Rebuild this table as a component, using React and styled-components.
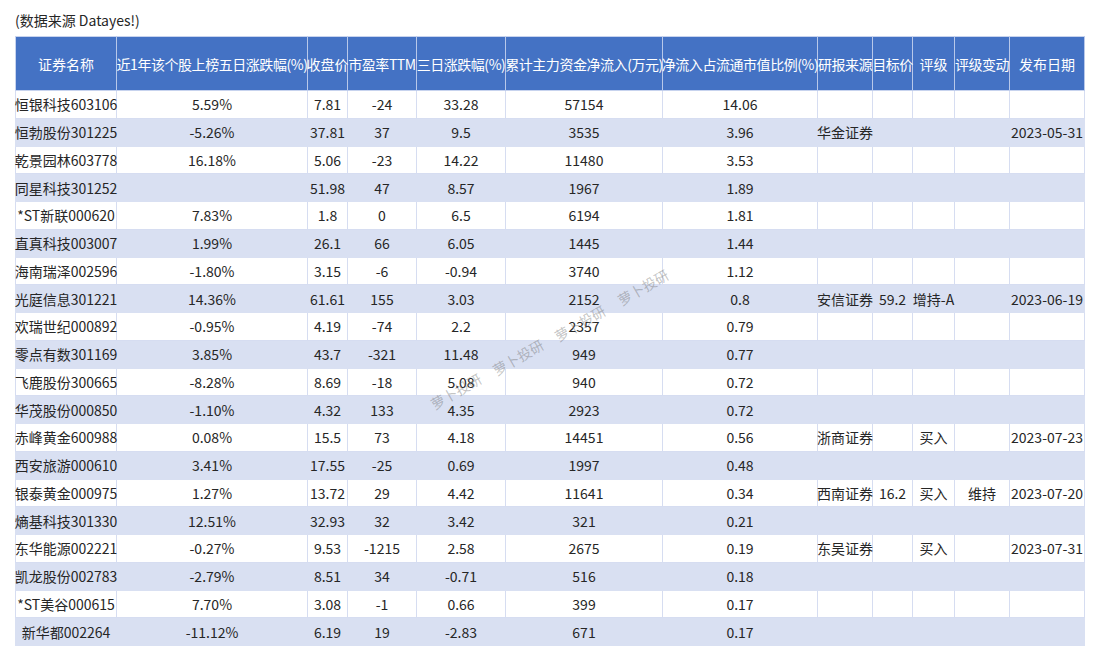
import React from "react";
import styled, { createGlobalStyle } from "styled-components";

const GlobalStyle = createGlobalStyle`
  html, body { margin: 0; padding: 0; background: #ffffff; }
  body { font-family: "Noto Sans CJK SC", "Noto Sans", sans-serif; color: #262626; }
`;

const COLS = "102px 191px 40px 69px 89px 157px 155px 55px 40px 42px 55px 75px";
const STRIPE = "#d9e0f2";
const LINE = "#d6ddf1";

const Page = styled.div`
  position: relative;
  width: 1100px;
  height: 660px;
  padding: 10px 15px 0 15px;
  box-sizing: border-box;
`;

const Caption = styled.div`
  font-size: 14px;
  line-height: 20px;
  height: 20px;
  margin-bottom: 6px;
  white-space: nowrap;
`;

const Table = styled.div`
  width: 1070px;
  display: flex;
  flex-direction: column;
`;

const Row = styled.div`
  display: grid;
  grid-template-columns: ${COLS};
  height: ${(p) => (p.$header ? "55px" : "27.75px")};
  background: ${(p) => (p.$header ? "#4472c4" : p.$striped ? STRIPE : "#ffffff")};
  color: ${(p) => (p.$header ? "#ffffff" : "#262626")};
`;

const Cell = styled.div`
  box-sizing: border-box;
  display: flex;
  align-items: center;
  justify-content: center;
  white-space: nowrap;
  font-size: 14px;
  line-height: 18px;
  min-width: 0;
  letter-spacing: ${(p) => (p.$header && p.$tight ? "-0.45px" : "0")};
  border-right: 1px solid ${(p) => (p.$header ? "#b8c8ea" : p.$striped ? STRIPE : LINE)};
  border-bottom: 1px solid ${(p) => (p.$header ? "#c7d3ee" : p.$striped ? STRIPE : LINE)};
  border-left: ${(p) => (p.$first ? `1px solid ${p.$header ? "#c7d3ee" : p.$striped ? STRIPE : LINE}` : "none")};
  border-top: ${(p) => (p.$header ? "1px solid #c7d3ee" : "none")};
`;

const Watermark = styled.span`
  position: absolute;
  font-size: 14px;
  line-height: 16px;
  color: rgba(110, 110, 110, 0.42);
  white-space: nowrap;
  transform: translate(-50%, -50%) rotate(-30deg);
  pointer-events: none;
`;

const headers = [
  "证券名称",
  "近1年该个股上榜五日涨跌幅(%)",
  "收盘价",
  "市盈率TTM",
  "三日涨跌幅(%)",
  "累计主力资金净流入(万元)",
  "净流入占流通市值比例(%)",
  "研报来源",
  "目标价",
  "评级",
  "评级变动",
  "发布日期",
];

const tightHeaders = new Set([1, 3, 4, 5, 6, 7, 8, 10]);

const rows = [
  ["恒银科技603106", "5.59%", "7.81", "-24", "33.28", "57154", "14.06", "", "", "", "", ""],
  ["恒勃股份301225", "-5.26%", "37.81", "37", "9.5", "3535", "3.96", "华金证券", "", "", "", "2023-05-31"],
  ["乾景园林603778", "16.18%", "5.06", "-23", "14.22", "11480", "3.53", "", "", "", "", ""],
  ["同星科技301252", "", "51.98", "47", "8.57", "1967", "1.89", "", "", "", "", ""],
  ["*ST新联000620", "7.83%", "1.8", "0", "6.5", "6194", "1.81", "", "", "", "", ""],
  ["直真科技003007", "1.99%", "26.1", "66", "6.05", "1445", "1.44", "", "", "", "", ""],
  ["海南瑞泽002596", "-1.80%", "3.15", "-6", "-0.94", "3740", "1.12", "", "", "", "", ""],
  ["光庭信息301221", "14.36%", "61.61", "155", "3.03", "2152", "0.8", "安信证券", "59.2", "增持-A", "", "2023-06-19"],
  ["欢瑞世纪000892", "-0.95%", "4.19", "-74", "2.2", "2357", "0.79", "", "", "", "", ""],
  ["零点有数301169", "3.85%", "43.7", "-321", "11.48", "949", "0.77", "", "", "", "", ""],
  ["飞鹿股份300665", "-8.28%", "8.69", "-18", "5.08", "940", "0.72", "", "", "", "", ""],
  ["华茂股份000850", "-1.10%", "4.32", "133", "4.35", "2923", "0.72", "", "", "", "", ""],
  ["赤峰黄金600988", "0.08%", "15.5", "73", "4.18", "14451", "0.56", "浙商证券", "", "买入", "", "2023-07-23"],
  ["西安旅游000610", "3.41%", "17.55", "-25", "0.69", "1997", "0.48", "", "", "", "", ""],
  ["银泰黄金000975", "1.27%", "13.72", "29", "4.42", "11641", "0.34", "西南证券", "16.2", "买入", "维持", "2023-07-20"],
  ["熵基科技301330", "12.51%", "32.93", "32", "3.42", "321", "0.21", "", "", "", "", ""],
  ["东华能源002221", "-0.27%", "9.53", "-1215", "2.58", "2675", "0.19", "东吴证券", "", "买入", "", "2023-07-31"],
  ["凯龙股份002783", "-2.79%", "8.51", "34", "-0.71", "516", "0.18", "", "", "", "", ""],
  ["*ST美谷000615", "7.70%", "3.08", "-1", "0.66", "399", "0.17", "", "", "", "", ""],
  ["新华都002264", "-11.12%", "6.19", "19", "-2.83", "671", "0.17", "", "", "", "", ""],
];

const marks = [
  { x: 456, y: 391 },
  { x: 518, y: 357 },
  { x: 580, y: 323 },
  { x: 643, y: 287 },
];

export default function App() {
  return (
    <>
      <GlobalStyle />
      <Page>
        <Caption>(数据来源 Datayes!)</Caption>
        <Table>
          <Row $header>
            {headers.map((h, i) => (
              <Cell key={i} $header $first={i === 0} $tight={tightHeaders.has(i)}>
                {h}
              </Cell>
            ))}
          </Row>
          {rows.map((r, ri) => {
            const striped = ri % 2 === 1;
            return (
              <Row key={ri} $striped={striped}>
                {r.map((c, ci) => (
                  <Cell key={ci} $striped={striped} $first={ci === 0}>
                    {c}
                  </Cell>
                ))}
              </Row>
            );
          })}
        </Table>
        {marks.map((m, i) => (
          <Watermark key={i} style={{ left: m.x, top: m.y }}>
            萝卜投研
          </Watermark>
        ))}
      </Page>
    </>
  );
}
